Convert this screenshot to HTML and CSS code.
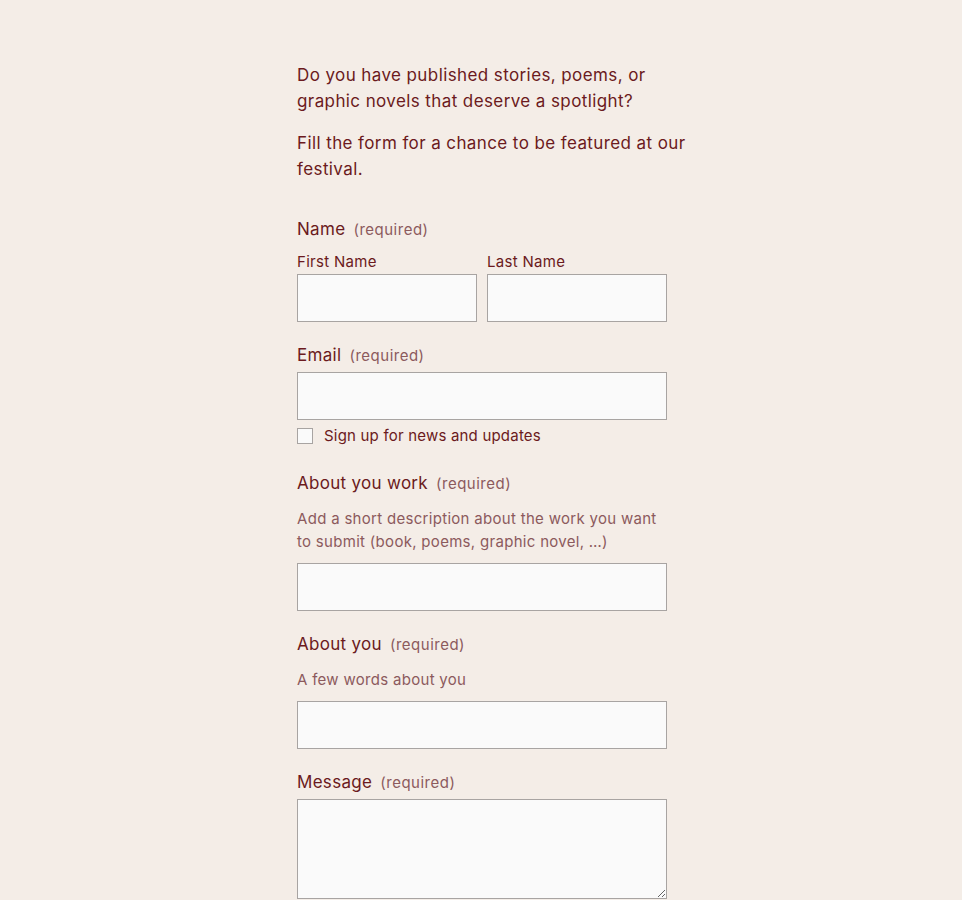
FILE: index.html
```html
<!DOCTYPE html>
<html lang="en">
<head>
<meta charset="utf-8">
<title>Submission form</title>
<link rel="stylesheet" href="styles.css">
</head>
<body>
<main class="page">
  <section class="intro">
    <p>Do you have published stories, poems, or graphic novels that deserve a spotlight?</p>
    <p>Fill the form for a chance to be featured at our festival.</p>
  </section>
  <form class="form">
    <div class="field">
      <span class="label">Name <span class="req">(required)</span></span>
      <div class="name-row">
        <label class="sub">
          <span class="sub-label">First Name</span>
          <input class="input" type="text">
        </label>
        <label class="sub">
          <span class="sub-label">Last Name</span>
          <input class="input" type="text">
        </label>
      </div>
    </div>
    <div class="field">
      <label class="label">Email <span class="req">(required)</span></label>
      <input class="input wide" type="email">
      <label class="check"><span class="box"></span><span>Sign up for news and updates</span></label>
    </div>
    <div class="field">
      <label class="label">About you work <span class="req">(required)</span></label>
      <p class="desc">Add a short description about the work you want to submit (book, poems, graphic novel, …)</p>
      <input class="input wide" type="text">
    </div>
    <div class="field">
      <label class="label">About you <span class="req">(required)</span></label>
      <p class="desc">A few words about you</p>
      <input class="input wide" type="text">
    </div>
    <div class="field">
      <label class="label">Message <span class="req">(required)</span></label>
      <textarea class="input wide area"></textarea>
    </div>
  </form>
</main>
</body>
</html>
```

FILE: styles.css
```css
html, body {
  margin: 0;
  padding: 0;
  background: #f4ede7;
}
body {
  font-family: "Inter", "Liberation Sans", sans-serif;
  color: #6b1a20;
  letter-spacing: 0.3px;
}
.page {
  width: 400px;
  padding: 62px 0 0 297px;
}
.intro p {
  margin: 0 0 16px;
  font-size: 17px;
  line-height: 26px;
  letter-spacing: 0.4px;
}
.form {
  margin-top: 35px;
  display: flex;
  flex-direction: column;
  gap: 21px;
  width: 370px;
}
.field {
  display: flex;
  flex-direction: column;
}
.label {
  font-size: 17px;
  line-height: 24px;
  margin-bottom: 4px;
}
.req {
  font-size: 15px;
  letter-spacing: 0.5px;
  color: #8c5a5d;
  margin-left: 3px;
}
.name-row {
  display: flex;
  gap: 10px;
  margin-top: 7px;
}
.sub {
  display: flex;
  flex-direction: column;
  width: 180px;
}
.sub-label {
  font-size: 15px;
  line-height: 18px;
  margin-bottom: 3px;
}
.input {
  box-sizing: border-box;
  height: 48px;
  width: 180px;
  background: #fafafa;
  border: 1px solid #a8a4a2;
  border-radius: 0;
  margin: 0;
  font: inherit;
}
.input.wide {
  width: 370px;
}
.area {
  height: 100px;
  resize: vertical;
}
.check {
  display: flex;
  align-items: center;
  gap: 11px;
  margin-top: 7px;
  margin-bottom: 5px;
  font-size: 15px;
  line-height: 18px;
  letter-spacing: 0.2px;
}
.box {
  width: 16px;
  height: 16px;
  box-sizing: border-box;
  background: #fafafa;
  border: 1px solid #a8a4a2;
}
.desc {
  margin: 7px 0 10px;
  font-size: 15px;
  line-height: 23px;
  color: #8c5a5d;
}
```
